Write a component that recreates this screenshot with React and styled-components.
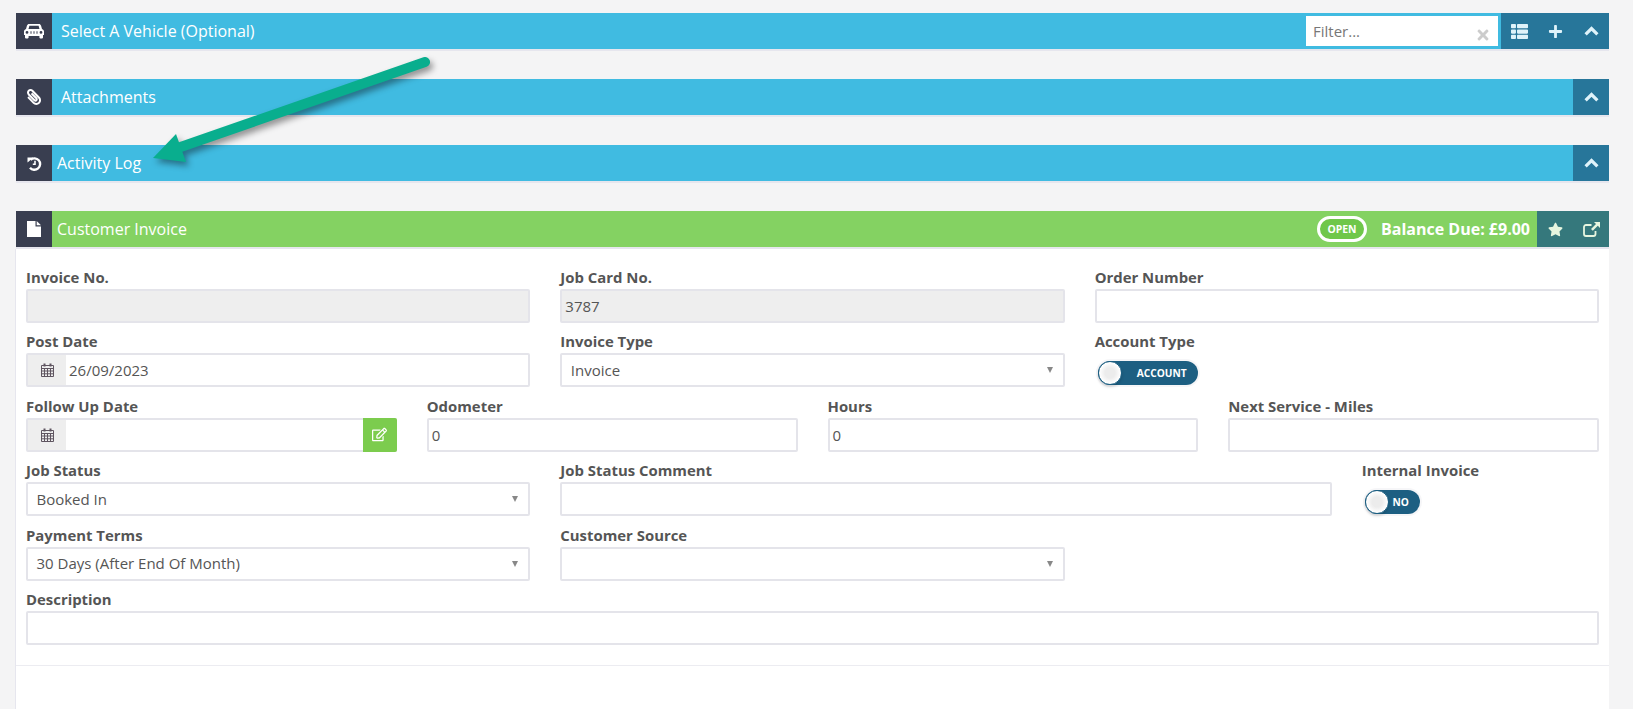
import React from 'react';
import styled, { createGlobalStyle } from 'styled-components';
import { FaPaperclip, FaThList, FaPlus, FaStar, FaTimes, FaRegEdit } from 'react-icons/fa';

const GlobalStyle = createGlobalStyle`
    html, body {
        margin: 0;
        padding: 0;
        height: 709px;
        overflow: hidden;
        background: #f4f4f5;
    }

    * {
        box-sizing: border-box;
    }
`;

const Page = styled.div`
    position: relative;
    height: 709px;
    padding: 13px 24px 0 16px;
    font-family: 'Open Sans', 'Liberation Sans', sans-serif;
    color: #555;
`;

const Bar = styled.div`
    display: flex;
    align-items: stretch;
    height: 38px;
    margin-bottom: ${p => (p.$flush ? 0 : '28px')};
    border-bottom: 2px solid #e6e6ee;
    background: ${p => (p.$green ? '#84d262' : '#40bbe1')};
`;

const IconBox = styled.div`
    flex: 0 0 36px;
    display: flex;
    align-items: center;
    justify-content: center;
    background: #393e50;
    color: #fff;
    font-size: 16px;

    & .flip {
        transform: scaleX(-1);
    }
`;

const Title = styled.div`
    flex: 1;
    padding-left: ${p => p.$inset}px;
    font-size: 16px;
    line-height: 37px;
    color: #fff;
`;

const FilterBox = styled.div`
    position: relative;
    align-self: center;
    width: 192px;
    height: 30px;
    margin-right: 3px;
    padding-left: 7px;
    background: #fff;
    color: #777;
    font-size: 15px;
    line-height: 30px;
`;

const FilterClear = styled.span`
    position: absolute;
    right: 7px;
    top: 11px;
    color: #ccc;
    font-size: 16px;
    line-height: 1;
`;

const Actions = styled.div`
    display: flex;
    background: ${p => (p.$teal ? '#35787c' : '#27769a')};
    color: ${p => (p.$teal ? '#e6f5df' : '#dff3fa')};
`;

const ActionButton = styled.div`
    width: 36px;
    display: flex;
    align-items: center;
    justify-content: center;
    font-size: ${p => p.$size || 15}px;
`;

const StatusBadge = styled.div`
    align-self: center;
    width: 50px;
    height: 26px;
    margin-right: 14px;
    border: 3px solid #fff;
    border-radius: 13px;
    background: #6fc74a;
    color: #fff;
    font-size: 10.4px;
    font-weight: 700;
    line-height: 20px;
    text-align: center;
`;

const Balance = styled.div`
    margin-right: 7px;
    color: #fff;
    font-size: 16px;
    font-weight: 700;
    line-height: 37px;
    white-space: nowrap;
`;

const Panel = styled.div`
    height: 460px;
    margin-left: -1px;
    border-left: 1px solid #e6e6ee;
    background: #fff;
`;

const Form = styled.div`
    display: grid;
    grid-template-columns: repeat(12, 1fr);
    column-gap: 30px;
    row-gap: 9.4px;
    padding: 19px 10px 20px 10px;
    border-bottom: 1px solid #ececf1;
`;

const Field = styled.div`
    grid-column: span ${p => p.$span};
    min-width: 0;
`;

const Label = styled.div`
    height: 21px;
    color: #555;
    font-size: 14.9px;
    font-weight: 700;
    line-height: 18px;
    white-space: nowrap;
`;

const Input = styled.div`
    height: 34px;
    padding: 0 3px;
    border: 2px solid #e4e4ea;
    border-radius: 2px;
    background: ${p => (p.$disabled ? '#eee' : '#fff')};
    color: #555;
    font-size: 15px;
    line-height: 31px;
`;

const SelectBox = styled(Input)`
    display: flex;
    align-items: center;
    justify-content: space-between;
    padding: 0 9px 0 8.5px;
`;

const Caret = styled.span`
    width: 0;
    height: 0;
    margin-right: 1px;
    border-left: 3.5px solid transparent;
    border-right: 3.5px solid transparent;
    border-top: 6px solid #888;
`;

const InputGroup = styled.div`
    display: flex;
    height: 34px;
    border: 2px solid #e4e4ea;
    border-radius: 2px;
    background: #fff;
    font-size: 15px;
    line-height: 31px;
`;

const Addon = styled.div`
    flex: 0 0 38px;
    display: flex;
    align-items: center;
    justify-content: center;
    background: #eee;
    color: #5f5560;
`;

const GroupValue = styled.div`
    flex: 1;
    padding-left: 3px;
`;

const EditButton = styled.div`
    display: flex;
    align-items: center;
    justify-content: center;
    width: 34px;
    margin: -2px -2px -2px 0;
    border-radius: 0 2px 2px 0;
    background: #7ccc4e;
    color: #fff;
    font-size: 15px;
`;

const Toggle = styled.div`
    position: relative;
    width: ${p => p.$width}px;
    height: 24px;
    margin: 8px 0 0 3px;
    padding-right: 11px;
    border-radius: 12px;
    background: #1d5f82;
    box-shadow: 0 0 0 2px #f6f6f8;
    color: #fff;
    font-size: 10.2px;
    font-weight: 700;
    line-height: 24px;
    text-align: right;
`;

const Knob = styled.span`
    position: absolute;
    left: 0;
    top: 0;
    width: 24px;
    height: 24px;
    border: 1px solid #1d5f82;
    border-radius: 50%;
    background: radial-gradient(circle, #ececec 0 32%, #fff 68%);
    box-shadow: 0 2px 3px rgba(0, 0, 0, 0.15);
`;

const ArrowLayer = styled.svg`
    position: absolute;
    left: 0;
    top: 0;
    pointer-events: none;
    filter: drop-shadow(3px 4px 3px rgba(0, 0, 0, 0.4));
`;

const CarIcon = () => (
    <svg width="20" height="16" viewBox="0 0 20 16" fill="currentColor">
        <path
            fillRule="evenodd"
            d="M5 1h10c1 0 1.6.6 2 1.6L18 6c1.2.4 2 1.4 2 2.6V12h-1v2.6a.8.8 0 0 1-.8.8h-2a.8.8 0 0 1-.8-.8V13H4.600v1.600a.8.8 0 0 1-.8.8h-2a.8.8 0 0 1-.8-.8V12H0V8.600C0 7.400.8 6.400 2 6l1-3.400C3.400 1.600 4 1 5 1zM5.400 2.800 4.500 6h11l-.9-3.200zM3 8a1.400 1.400 0 1 0 0 2.800A1.400 1.400 0 0 0 3 8zm14 0a1.400 1.400 0 1 0 0 2.800A1.400 1.400 0 0 0 17 8zM6.500 8.200v2.600h1V8.200zm3 0v2.600h1V8.200zm3 0v2.600h1V8.200z"
        />
    </svg>
);

const HistoryIcon = () => (
    <svg width="15" height="15" viewBox="0 0 15 15" fill="none">
        <path d="M3.600 3.800A5.700 5.700 0 1 1 3 11.700" stroke="currentColor" strokeWidth="2.400" />
        <path d="M0.500 1.500 L6.500 1.500 L0.500 6.500 Z" fill="currentColor" />
        <path d="M8 4.800V8.200H5.800" stroke="currentColor" strokeWidth="1.600" />
    </svg>
);

const FileIcon = () => (
    <svg width="14" height="16" viewBox="0 0 14 16" fill="currentColor">
        <path d="M0 0h8.500v5.500H14V16H0z" />
        <path d="M9.700 0 14 4.300H9.700z" />
    </svg>
);

const ChevronIcon = () => (
    <svg width="15" height="10" viewBox="0 0 15 10" fill="none">
        <path d="M1.600 8.400 7.500 2.500l5.900 5.900" stroke="currentColor" strokeWidth="3.200" />
    </svg>
);

const CalendarIcon = () => (
    <svg width="13" height="14" viewBox="0 0 13 14" fill="none" stroke="currentColor" strokeWidth="1">
        <path d="M.5 2.500h12v11H.5zM.5 5.500h12M.5 8h12M.5 10.800h12M3.500 5.500v8M6.500 5.500v8M9.500 5.500v8" />
        <path d="M3.500 .5v3M9.500 .5v3" strokeWidth="2" />
    </svg>
);

const OpenLinkIcon = () => (
    <svg width="17" height="15" viewBox="0 0 17 15" fill="none">
        <path d="M8.500 3H3a2 2 0 0 0-2 2v7a2 2 0 0 0 2 2h7.500a2 2 0 0 0 2-2V9" stroke="currentColor" strokeWidth="1.800" />
        <path d="M11 0h6v6l-2.200-2.200-5 5-1.800-1.800 5-5z" fill="currentColor" />
    </svg>
);

const CollapseBar = ({ icon, title, inset }) => (
    <Bar>
        <IconBox>{icon}</IconBox>
        <Title $inset={inset}>{title}</Title>
        <Actions>
            <ActionButton>
                <ChevronIcon />
            </ActionButton>
        </Actions>
    </Bar>
);

const Select = ({ value }) => (
    <SelectBox>
        <span>{value}</span>
        <Caret />
    </SelectBox>
);

const App = () => (
    <Page>
        <GlobalStyle />
        <Bar>
            <IconBox>
                <CarIcon />
            </IconBox>
            <Title $inset={9}>Select A Vehicle (Optional)</Title>
            <FilterBox>
                Filter...
                <FilterClear>
                    <FaTimes />
                </FilterClear>
            </FilterBox>
            <Actions>
                <ActionButton $size={17}>
                    <FaThList />
                </ActionButton>
                <ActionButton>
                    <FaPlus />
                </ActionButton>
                <ActionButton>
                    <ChevronIcon />
                </ActionButton>
            </Actions>
        </Bar>
        <CollapseBar icon={<FaPaperclip className="flip" />} title="Attachments" inset={9} />
        <CollapseBar icon={<HistoryIcon />} title="Activity Log" inset={5} />

        <Bar $green $flush>
            <IconBox>
                <FileIcon />
            </IconBox>
            <Title $inset={5}>Customer Invoice</Title>
            <StatusBadge>OPEN</StatusBadge>
            <Balance>Balance Due: £9.00</Balance>
            <Actions $teal>
                <ActionButton>
                    <FaStar />
                </ActionButton>
                <ActionButton>
                    <OpenLinkIcon />
                </ActionButton>
            </Actions>
        </Bar>
        <Panel>
            <Form>
                <Field $span={4}>
                    <Label>Invoice No.</Label>
                    <Input $disabled />
                </Field>
                <Field $span={4}>
                    <Label>Job Card No.</Label>
                    <Input $disabled>3787</Input>
                </Field>
                <Field $span={4}>
                    <Label>Order Number</Label>
                    <Input />
                </Field>

                <Field $span={4}>
                    <Label>Post Date</Label>
                    <InputGroup>
                        <Addon>
                            <CalendarIcon />
                        </Addon>
                        <GroupValue>26/09/2023</GroupValue>
                    </InputGroup>
                </Field>
                <Field $span={4}>
                    <Label>Invoice Type</Label>
                    <Select value="Invoice" />
                </Field>
                <Field $span={4}>
                    <Label>Account Type</Label>
                    <Toggle $width={100}>
                        <Knob />
                        ACCOUNT
                    </Toggle>
                </Field>

                <Field $span={3}>
                    <Label>Follow Up Date</Label>
                    <InputGroup>
                        <Addon>
                            <CalendarIcon />
                        </Addon>
                        <GroupValue />
                        <EditButton>
                            <FaRegEdit />
                        </EditButton>
                    </InputGroup>
                </Field>
                <Field $span={3}>
                    <Label>Odometer</Label>
                    <Input>0</Input>
                </Field>
                <Field $span={3}>
                    <Label>Hours</Label>
                    <Input>0</Input>
                </Field>
                <Field $span={3}>
                    <Label>Next Service - Miles</Label>
                    <Input />
                </Field>

                <Field $span={4}>
                    <Label>Job Status</Label>
                    <Select value="Booked In" />
                </Field>
                <Field $span={6}>
                    <Label>Job Status Comment</Label>
                    <Input />
                </Field>
                <Field $span={2}>
                    <Label>Internal Invoice</Label>
                    <Toggle $width={55}>
                        <Knob />
                        NO
                    </Toggle>
                </Field>

                <Field $span={4}>
                    <Label>Payment Terms</Label>
                    <Select value="30 Days (After End Of Month)" />
                </Field>
                <Field $span={4}>
                    <Label>Customer Source</Label>
                    <SelectBox>
                        <span />
                        <Caret />
                    </SelectBox>
                </Field>
                <Field $span={4} />

                <Field $span={12}>
                    <Label>Description</Label>
                    <Input />
                </Field>
            </Form>
        </Panel>

        <ArrowLayer width="1633" height="709" viewBox="0 0 1633 709">
            <path d="M425 62 L172 150" stroke="#09ae8e" strokeWidth="10" strokeLinecap="round" fill="none" />
            <path d="M153 158 L176 134 L186 162 Z" fill="#09ae8e" />
        </ArrowLayer>
    </Page>
);

export default App;
